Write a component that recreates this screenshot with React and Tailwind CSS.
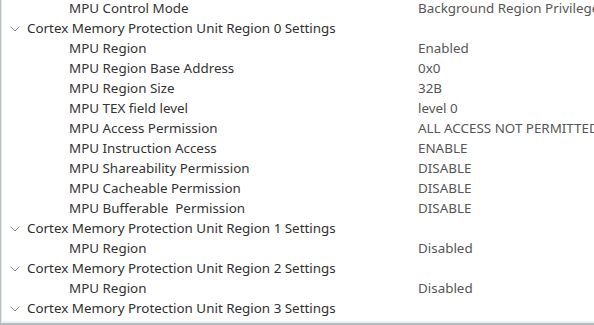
import React from "react";

const rows = [
  { t: "c", l: "MPU Control Mode", v: "Background Region Privileged" },
  { t: "h", l: "Cortex Memory Protection Unit Region 0 Settings" },
  { t: "c", l: "MPU Region", v: "Enabled" },
  { t: "c", l: "MPU Region Base Address", v: "0x0" },
  { t: "c", l: "MPU Region Size", v: "32B" },
  { t: "c", l: "MPU TEX field level", v: "level 0" },
  { t: "c", l: "MPU Access Permission", v: "ALL ACCESS NOT PERMITTED" },
  { t: "c", l: "MPU Instruction Access", v: "ENABLE" },
  { t: "c", l: "MPU Shareability Permission", v: "DISABLE" },
  { t: "c", l: "MPU Cacheable Permission", v: "DISABLE" },
  { t: "c", l: "MPU Bufferable  Permission", v: "DISABLE" },
  { t: "h", l: "Cortex Memory Protection Unit Region 1 Settings" },
  { t: "c", l: "MPU Region", v: "Disabled" },
  { t: "h", l: "Cortex Memory Protection Unit Region 2 Settings" },
  { t: "c", l: "MPU Region", v: "Disabled" },
  { t: "h", l: "Cortex Memory Protection Unit Region 3 Settings" },
];

function Chevron() {
  return (
    <svg width="10" height="6" viewBox="0 0 10 6" className="shrink-0">
      <path d="M0.5 0.5 L5 5 L9.5 0.5" fill="none" stroke="#8a8a8a" strokeWidth="1" />
    </svg>
  );
}

export default function App() {
  return (
    <div
      className="w-[594px] h-[325px] overflow-hidden bg-white border-l border-b-2 border-l-[#b9bec3] border-b-[#b6bbbf]"
      style={{ fontFamily: '"Noto Sans", sans-serif' }}
    >
      <div className="h-full overflow-hidden border-l border-b-2 border-l-[#e6e9eb] border-b-[#edf0f1]">
        <div className="mt-[-1px] text-[13.4px] leading-none">
          {rows.map((r, i) =>
            r.t === "h" ? (
              <div key={i} className="h-[20px] flex items-center whitespace-nowrap">
                <div className="w-[25px] pl-[8px] flex items-center">
                  <Chevron />
                </div>
                <span className="text-[#2f2f2f]">{r.l}</span>
              </div>
            ) : (
              <div key={i} className="h-[20px] flex items-center whitespace-nowrap">
                <span className="w-[416px] pl-[67px] shrink-0 text-[#333333]" style={{ whiteSpace: "pre" }}>
                  {r.l}
                </span>
                <span className="text-[#565656]">{r.v}</span>
              </div>
            )
          )}
        </div>
      </div>
    </div>
  );
}
